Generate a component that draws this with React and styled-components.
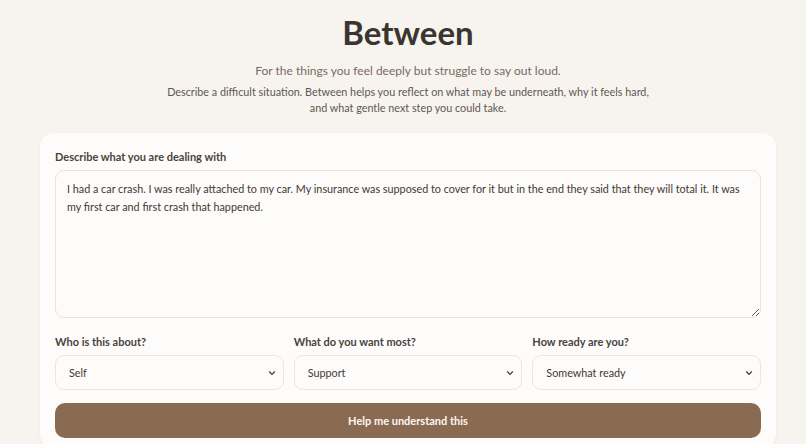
import React, { useState } from "react";
import styled, { createGlobalStyle } from "styled-components";

const Global = createGlobalStyle`
  html, body { margin: 0; padding: 0; background: #f7f4ef; }
  body { font-family: Lato, "Noto Sans", sans-serif; color: #3b3631; }
  * { box-sizing: border-box; }
`;

const Page = styled.div`
  min-height: 444px;
  padding: 12px 30px 0 40px;
  display: flex;
  flex-direction: column;
  align-items: center;
`;

const Header = styled.header`
  display: flex;
  flex-direction: column;
  align-items: center;
  text-align: center;
`;

const Title = styled.h1`
  margin: 0;
  font-size: 33px;
  line-height: 40px;
  font-weight: 700;
  color: #3a3530;
`;

const Tagline = styled.p`
  margin: 10px 0 0;
  font-size: 12px;
  line-height: 18px;
  color: #7a6a5f;
`;

const Intro = styled.p`
  margin: 4px 0 0;
  font-size: 10.8px;
  line-height: 16px;
  color: #5f5750;
`;

const Card = styled.section`
  width: 736px;
  margin-top: 17px;
  background: #fdfcfa;
  border-radius: 14px;
  padding: 16px 15px 10px;
  box-shadow: 0 1px 3px rgba(120, 100, 80, 0.06);
  display: flex;
  flex-direction: column;
`;

const Label = styled.label`
  display: block;
  font-size: 11px;
  font-weight: 700;
  line-height: 16px;
  color: #4a433d;
  margin-bottom: 5px;
`;

const TextArea = styled.textarea`
  width: 100%;
  height: 148px;
  resize: vertical;
  border: 1px solid #e8e3dc;
  border-radius: 9px;
  background: #fdfcfa;
  padding: 9px 11px;
  font-family: inherit;
  font-size: 10.8px;
  line-height: 18px;
  color: #3f3934;
  outline: none;
  display: block;
`;

const Row = styled.div`
  display: grid;
  grid-template-columns: repeat(3, 1fr);
  gap: 10px;
  margin-top: 16px;
`;

const Field = styled.div`
  display: flex;
  flex-direction: column;
`;

const SelectWrap = styled.div`
  position: relative;
`;

const Select = styled.select`
  appearance: none;
  width: 100%;
  height: 35px;
  border: 1px solid #ebe6df;
  border-radius: 9px;
  background: #fdfcfa;
  padding: 0 13px;
  font-family: inherit;
  font-size: 10.8px;
  color: #3f3934;
  outline: none;
`;

const Chevron = styled.svg`
  position: absolute;
  right: 8px;
  top: 50%;
  margin-top: -3px;
  width: 8px;
  height: 6px;
  pointer-events: none;
`;

const Button = styled.button`
  margin-top: 13px;
  height: 35px;
  width: 100%;
  border: none;
  border-radius: 10px;
  background: #8b6a52;
  color: #fbf7f2;
  font-family: inherit;
  font-size: 11px;
  font-weight: 700;
  cursor: pointer;
`;

function Dropdown({ label, value, options }) {
  const [v, setV] = useState(value);
  return (
    <Field>
      <Label>{label}</Label>
      <SelectWrap>
        <Select value={v} onChange={(e) => setV(e.target.value)}>
          {options.map((o) => (
            <option key={o}>{o}</option>
          ))}
        </Select>
        <Chevron viewBox="0 0 8 6">
          <path d="M1.2 1.5 L4 4.3 L6.8 1.5" fill="none" stroke="#3f3934" strokeWidth="1.2" />
        </Chevron>
      </SelectWrap>
    </Field>
  );
}

export default function App() {
  const [text, setText] = useState(
    "I had a car crash. I was really attached to my car. My insurance was supposed to cover for it but in the end they said that they will total it. It was my first car and first crash that happened."
  );
  return (
    <>
      <Global />
      <Page>
        <Header>
          <Title>Between</Title>
          <Tagline>For the things you feel deeply but struggle to say out loud.</Tagline>
          <Intro>
            Describe a difficult situation. Between helps you reflect on what may be underneath, why it feels hard,
            <br />
            and what gentle next step you could take.
          </Intro>
        </Header>
        <Card>
          <Label>Describe what you are dealing with</Label>
          <TextArea value={text} onChange={(e) => setText(e.target.value)} spellCheck={false} />
          <Row>
            <Dropdown label="Who is this about?" value="Self" options={["Self", "Someone else", "Both"]} />
            <Dropdown label="What do you want most?" value="Support" options={["Support", "Clarity", "Advice"]} />
            <Dropdown
              label="How ready are you?"
              value="Somewhat ready"
              options={["Not ready", "Somewhat ready", "Very ready"]}
            />
          </Row>
          <Button>Help me understand this</Button>
        </Card>
      </Page>
    </>
  );
}
